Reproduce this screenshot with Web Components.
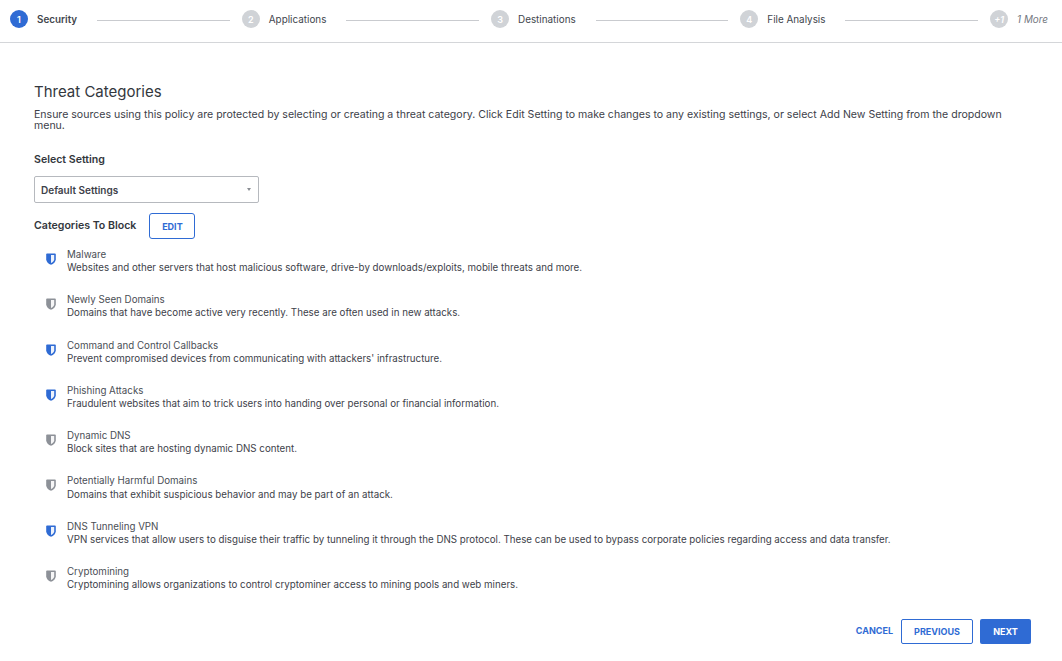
<!DOCTYPE html>
<html>
<head>
<meta charset="utf-8">
<title>Threat Categories</title>
<style>
html, body { margin: 0; height: 100%; background: #fff; }
body { font-family: Inter, "Liberation Sans", sans-serif; color: #3d4149; }
</style>
</head>
<body>
<policy-wizard>
	<wizard-steps>
		<wizard-step num="1" state="active">Security</wizard-step>
		<wizard-step num="2">Applications</wizard-step>
		<wizard-step num="3">Destinations</wizard-step>
		<wizard-step num="4">File Analysis</wizard-step>
		<wizard-step num="+1" state="more" last>1 More</wizard-step>
	</wizard-steps>
	<threat-panel>
		<threat-item on name="Malware">Websites and other servers that host malicious software, drive-by downloads/exploits, mobile threats and more.</threat-item>
		<threat-item name="Newly Seen Domains">Domains that have become active very recently. These are often used in new attacks.</threat-item>
		<threat-item on name="Command and Control Callbacks">Prevent compromised devices from communicating with attackers' infrastructure.</threat-item>
		<threat-item on name="Phishing Attacks">Fraudulent websites that aim to trick users into handing over personal or financial information.</threat-item>
		<threat-item name="Dynamic DNS">Block sites that are hosting dynamic DNS content.</threat-item>
		<threat-item name="Potentially Harmful Domains">Domains that exhibit suspicious behavior and may be part of an attack.</threat-item>
		<threat-item on name="DNS Tunneling VPN">VPN services that allow users to disguise their traffic by tunneling it through the DNS protocol. These can be used to bypass corporate policies regarding access and data transfer.</threat-item>
		<threat-item name="Cryptomining">Cryptomining allows organizations to control cryptominer access to mining pools and web miners.</threat-item>
	</threat-panel>
	<wizard-footer></wizard-footer>
</policy-wizard>
<script>
(() => {
	function define(name, html, setup) {
		const template = document.createElement("template");
		template.innerHTML = html;
		customElements.define(
			name,
			class extends HTMLElement {
				constructor() {
					super();
					this.attachShadow({ mode: "open" }).append(template.content.cloneNode(true));
				}
				connectedCallback() {
					if (setup) setup(this, this.shadowRoot);
				}
			},
		);
	}

	define("policy-wizard", `
<style>
:host { display: flex; flex-direction: column; height: 661px; box-sizing: border-box; }
</style>
<slot></slot>
`);

	define("wizard-steps", `
<style>
:host {
	display: flex;
	align-items: center;
	box-sizing: border-box;
	height: 43px;
	padding: 0 14px 4px 10px;
	border-bottom: 1px solid #d4d6d9;
}
</style>
<slot></slot>
`);

	define("wizard-step", `
<style>
:host { display: flex; align-items: center; flex: 1 1 auto; font-size: 9.9px; color: #42464d; }
:host([last]) { flex: 0 0 auto; }
.dot {
	width: 18px;
	height: 18px;
	border-radius: 50%;
	background: #d0d3d7;
	color: #fff;
	font-size: 9px;
	font-weight: 600;
	display: flex;
	align-items: center;
	justify-content: center;
	flex: none;
	margin-right: 9px;
}
.line { flex: 1; height: 1px; background: #c9cbcf; margin: 0 12px 0 20px; position: relative; top: 1px; }
:host([state="active"]) .dot { background: #2f6bd4; }
:host([state="active"]) .label { font-weight: 600; }
:host([state="more"]) .dot, :host([state="more"]) .label { font-style: italic; }
:host([state="more"]) .label { color: #74787f; }
:host([last]) .line { display: none; }
</style>
<span class="dot"></span><span class="label"><slot></slot></span><span class="line"></span>
`, (el, root) => {
		root.querySelector(".dot").textContent = el.getAttribute("num");
	});

	define("threat-panel", `
<style>
:host { display: block; padding: 39px 34px 0; flex: 1; }
h2 { margin: 0; font-size: 15px; font-weight: 400; line-height: 20px; color: #33373d; }
p { margin: 7px 0 0; font-size: 10.55px; line-height: 11px; color: #3d4149; width: 985px; }
.heading { font-size: 10.6px; font-weight: 600; color: #33373d; }
.select-label { margin-top: 22px; line-height: 13px; }
.select {
	margin-top: 10px;
	width: 225px;
	height: 27px;
	box-sizing: border-box;
	border: 1px solid #b6b9be;
	border-radius: 2px;
	display: flex;
	align-items: center;
	justify-content: space-between;
	padding: 0 7px 0 6px;
	font-size: 10px;
	font-weight: 600;
	color: #3d4149;
}
.caret { width: 0; height: 0; border-left: 2px solid transparent; border-right: 2px solid transparent; border-top: 3px solid #8a8d93; }
.cats { display: flex; align-items: center; gap: 13px; margin-top: 10px; }
.cats .heading { margin-top: -2px; }
.edit {
	width: 46px;
	height: 26px;
	box-sizing: border-box;
	border: 1px solid #2f6bd4;
	border-radius: 3px;
	color: #2f6bd4;
	font-size: 9px;
	font-weight: 700;
	display: flex;
	align-items: center;
	justify-content: center;
}
.list { margin-top: 9px; padding-left: 12px; display: flex; flex-direction: column; gap: 18.9px; }
</style>
<h2>Threat Categories</h2>
<p>Ensure sources using this policy are protected by selecting or creating a threat category. Click Edit Setting to make changes to any existing settings, or select Add New Setting from the dropdown menu.</p>
<div class="heading select-label">Select Setting</div>
<div class="select"><span>Default Settings</span><span class="caret"></span></div>
<div class="cats"><span class="heading">Categories To Block</span><span class="edit">EDIT</span></div>
<div class="list"><slot></slot></div>
`);

	define("threat-item", `
<style>
:host { display: flex; align-items: flex-start; gap: 11px; font-size: 9.76px; line-height: 13.2px; color: #3d4149; height: 26.4px; }
svg { width: 10px; height: 12px; flex: none; margin-top: 5px; color: #8d9198; }
:host([on]) svg { color: #2f6bd4; }
.name { color: #4a4e55; }
</style>
<svg viewBox="0 0 10 12" aria-hidden="true">
	<path d="M1 .6H9C9.5 .6 9.8 .9 9.8 1.4V6.2C9.8 8.9 7.5 10.8 5 11.8 2.5 10.8 .2 8.9 .2 6.2V1.4C.2 .9 .5 .6 1 .6Z" fill="currentColor"/>
	<path d="M5 2.1H8.2V6.2C8.2 7.9 6.5 9.4 5 10.1Z" fill="#fff" opacity=".92"/>
</svg>
<div><div class="name"></div><div><slot></slot></div></div>
`, (el, root) => {
		root.querySelector(".name").textContent = el.getAttribute("name");
	});

	define("wizard-footer", `
<style>
:host { display: flex; justify-content: flex-end; align-items: center; gap: 7px; padding: 0 31px 17px 0; font-size: 9px; font-weight: 700; color: #2f6bd4; }
.btn { height: 25px; box-sizing: border-box; border-radius: 2px; display: flex; align-items: center; justify-content: center; }
.cancel { margin-right: 1px; position: relative; top: -1px; }
.prev { width: 72px; border: 1px solid #2f6bd4; }
.next { width: 51px; background: #2f6bd4; color: #fff; }
</style>
<span class="cancel">CANCEL</span>
<span class="btn prev">PREVIOUS</span>
<span class="btn next">NEXT</span>
`);
})();
</script>
</body>
</html>
